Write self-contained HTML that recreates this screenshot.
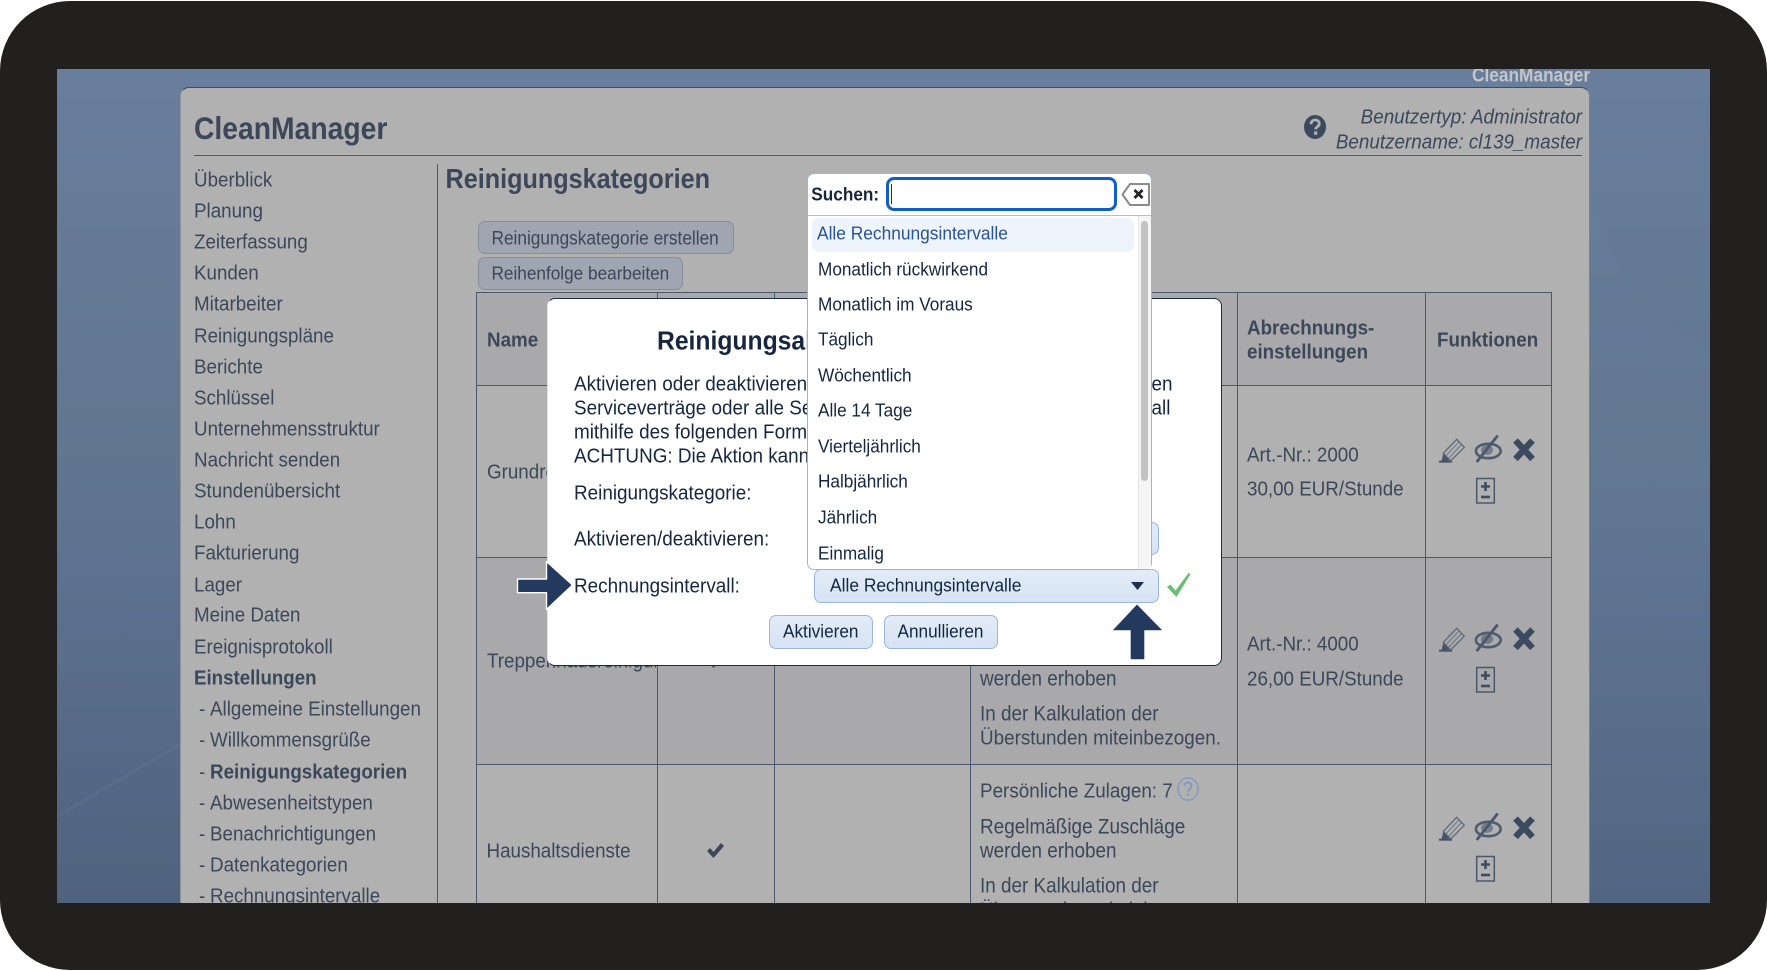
<!DOCTYPE html>
<html lang="de">
<head>
<meta charset="utf-8">
<title>CleanManager</title>
<style>
html,body{margin:0;padding:0;background:#fff;width:1767px;height:971px;overflow:hidden}
body{position:relative;font-family:"Liberation Sans",Arial,sans-serif}
#frame{position:absolute;left:0;top:1px;width:1767px;height:969px;background:#21201e;border-radius:70px}
#screen{position:absolute;left:57px;top:68.5px;width:1653px;height:834.5px;overflow:hidden;background:linear-gradient(180deg,#697e9d 0%,#61768f 45%,#5d7290 60%,#4f627e 100%)}
#stage{position:absolute;left:-57px;top:-68.5px;width:1767px;height:971px;--sy:1.1;color:#3c4759}
.t{position:absolute;line-height:0;white-space:nowrap;font-size:18.8px;transform-origin:0 0;transform:scaleY(var(--sy));left:calc(var(--x)*1px);top:calc(var(--b)*1px + .6px - .3465em*var(--sy))}
.tr{left:auto;right:calc((1767 - var(--x))*1px)}
.b{font-weight:bold}
.box{position:absolute;box-sizing:border-box}
#panel{left:180px;top:87px;width:1410px;height:900px;background:#b1b1b1;border-radius:9px 9px 0 0;border-top:1.5px solid #3d4e68;border-right:1px solid #76818f;border-left:1px solid #8e949d}
.ln{position:absolute;background:#4b586d}
.btn{position:absolute;box-sizing:border-box;background:#9fa6b1;border:1px solid #858e9c;border-radius:7px}
#modal{left:547px;top:298px;width:675px;height:368px;background:#fff;border:1.5px solid #1b2c4b;border-left:1px solid #dfe3ea;border-radius:8px}
#mw{--sy:1.06;color:#16263f}
#mw .t{font-size:18.9px}
#mw .dl{font-size:17.2px;margin-top:-.9px}
#mw .ui{font-size:17.4px;margin-top:-.6px}
.blu{position:absolute;box-sizing:border-box;background:linear-gradient(180deg,#e3ecf8,#d6e3f3);border:1.5px solid #9bb6e0;border-radius:7px}
#dd{left:807px;top:173px;width:345px;height:397px;background:#fff;border:1px solid #9ab4dc;border-radius:7px}
svg{position:absolute;overflow:visible}
</style>
</head>
<body>
<div id="frame"></div>
<div id="screen">
<div id="stage">
  <svg style="left:0;top:0" width="1767" height="971">
    <path d="M57 815 L180 743 L180 746 L57 818 Z" fill="#7186a2" opacity=".2"/>
    <path d="M1590 160 C1600 260 1640 320 1710 350 L1710 903 L1590 903 Z" fill="#7a8ba3" opacity=".10"/>
  </svg>

  <span class="t b" style="--x:1472;--b:81;font-size:17.3px;color:#c4c6c9">CleanManager</span>

  <div class="box" id="panel"></div>
  <span class="t b" style="--x:194;--b:138.3;font-size:28.3px">CleanManager</span>
  <div class="ln" style="left:194px;top:155px;width:1388px;height:1px"></div>

  <svg style="left:1304px;top:115px" width="22" height="24" viewBox="0 0 22 24"><ellipse cx="11" cy="12" rx="11" ry="12" fill="#3c4a5e"/><path d="M7 9.2 C7 6.5 9 5 11.2 5 C13.6 5 15.3 6.5 15.3 8.7 C15.3 11.5 11.7 11.8 11.7 14.4" fill="none" stroke="#b1b1b1" stroke-width="2.8"/><rect x="10" y="16.4" width="3.3" height="3.4" fill="#b1b1b1"/></svg>
  <span class="t tr" style="--x:1582;--b:123.3;font-style:italic;font-size:18.85px">Benutzertyp: Administrator</span>
  <span class="t tr" style="--x:1582;--b:148.8;font-style:italic;font-size:18.85px">Benutzername: cl139_master</span>

  <!-- nav -->
  <span class="t" style="--x:194;--b:186.5">Überblick</span>
  <span class="t" style="--x:194;--b:217.6">Planung</span>
  <span class="t" style="--x:194;--b:248.7">Zeiterfassung</span>
  <span class="t" style="--x:194;--b:280">Kunden</span>
  <span class="t" style="--x:194;--b:310.9">Mitarbeiter</span>
  <span class="t" style="--x:194;--b:342.4">Reinigungspläne</span>
  <span class="t" style="--x:194;--b:373.1">Berichte</span>
  <span class="t" style="--x:194;--b:404.2">Schlüssel</span>
  <span class="t" style="--x:194;--b:435.3">Unternehmensstruktur</span>
  <span class="t" style="--x:194;--b:466.4">Nachricht senden</span>
  <span class="t" style="--x:194;--b:497.5">Stundenübersicht</span>
  <span class="t" style="--x:194;--b:528.6">Lohn</span>
  <span class="t" style="--x:194;--b:559.7">Fakturierung</span>
  <span class="t" style="--x:194;--b:591.2">Lager</span>
  <span class="t" style="--x:194;--b:622">Meine Daten</span>
  <span class="t" style="--x:194;--b:653.4">Ereignisprotokoll</span>
  <span class="t b" style="--x:194;--b:684.1;font-size:18.7px">Einstellungen</span>
  <span class="t" style="--x:199;--b:716">- </span><span class="t" style="--x:210;--b:716">Allgemeine Einstellungen</span>
  <span class="t" style="--x:199;--b:746.7">- </span><span class="t" style="--x:210;--b:746.7">Willkommensgrüße</span>
  <span class="t" style="--x:199;--b:778.5">- </span><span class="t b" style="--x:210;--b:778.5">Reinigungskategorien</span>
  <span class="t" style="--x:199;--b:809.2">- </span><span class="t" style="--x:210;--b:809.2">Abwesenheitstypen</span>
  <span class="t" style="--x:199;--b:840.7">- </span><span class="t" style="--x:210;--b:840.7">Benachrichtigungen</span>
  <span class="t" style="--x:199;--b:871.4">- </span><span class="t" style="--x:210;--b:871.4">Datenkategorien</span>
  <span class="t" style="--x:199;--b:902.6">- </span><span class="t" style="--x:210;--b:902.6">Rechnungsintervalle</span>

  <div class="ln" style="left:437px;top:164px;width:1px;height:760px"></div>

  <span class="t b" style="--x:445.5;--b:188.5;font-size:25.2px">Reinigungskategorien</span>

  <div class="btn" style="left:478px;top:221px;width:256px;height:33px"></div>
  <span class="t" style="--x:491.5;--b:243.6;font-size:17.25px">Reinigungskategorie erstellen</span>
  <div class="btn" style="left:478px;top:257px;width:205px;height:33px"></div>
  <span class="t" style="--x:491.5;--b:278.7;font-size:17.2px">Reihenfolge bearbeiten</span>

  <!-- table backgrounds -->
  <div class="box" style="left:476px;top:292px;width:1075px;height:93px;background:#a9a9ab"></div>
  <div class="box" style="left:476px;top:385px;width:1075px;height:172px;background:#b1b1b1"></div>
  <div class="box" style="left:476px;top:557px;width:1075px;height:207px;background:#a9a9ab"></div>
  <div class="box" style="left:476px;top:764px;width:1075px;height:160px;background:#b1b1b1"></div>
  <!-- table lines -->
  <div class="ln" style="left:476px;top:292px;width:1076px;height:1px"></div>
  <div class="ln" style="left:476px;top:385px;width:1076px;height:1px"></div>
  <div class="ln" style="left:476px;top:557px;width:1076px;height:1px"></div>
  <div class="ln" style="left:476px;top:764px;width:1076px;height:1px"></div>
  <div class="ln" style="left:476px;top:292px;width:1px;height:640px"></div>
  <div class="ln" style="left:656.5px;top:292px;width:1px;height:640px"></div>
  <div class="ln" style="left:774px;top:292px;width:1px;height:640px"></div>
  <div class="ln" style="left:970px;top:292px;width:1px;height:640px"></div>
  <div class="ln" style="left:1237px;top:292px;width:1px;height:640px"></div>
  <div class="ln" style="left:1425px;top:292px;width:1px;height:640px"></div>
  <div class="ln" style="left:1551px;top:292px;width:1px;height:640px"></div>

  <!-- table text -->
  <span class="t b" style="--x:487;--b:346.7">Name</span>
  <span class="t b" style="--x:1247;--b:335">Abrechnungs-</span>
  <span class="t b" style="--x:1247;--b:358.3">einstellungen</span>
  <span class="t b" style="--x:1437;--b:346.7">Funktionen</span>

  <span class="t" style="--x:487;--b:479">Grundreinigung</span>
  <span class="t" style="--x:1247;--b:461.8">Art.-Nr.: 2000</span>
  <span class="t" style="--x:1247;--b:496">30,00 EUR/Stunde</span>

  <div style="position:absolute;left:477px;top:640px;width:179px;height:40px;overflow:hidden">
    <span class="t" style="--x:10;--b:27.5">Treppenhausreinigung</span>
  </div>
  <svg style="left:707px;top:653px" width="17" height="15" viewBox="0 0 17 15"><path d="M0 8 L3 5 L6.5 9 L14 0 L17 3 L6.5 15 Z" fill="#3c4759"/></svg>
  <span class="t" style="--x:980;--b:686.3;font-size:18.9px">werden erhoben</span>
  <span class="t" style="--x:980;--b:721.8;font-size:18.9px">In der Kalkulation der</span>
  <span class="t" style="--x:980;--b:744.8;font-size:18.85px">Überstunden miteinbezogen.</span>
  <span class="t" style="--x:1247;--b:651">Art.-Nr.: 4000</span>
  <span class="t" style="--x:1247;--b:685.3">26,00 EUR/Stunde</span>

  <span class="t" style="--x:486.5;--b:857.8">Haushaltsdienste</span>
  <svg style="left:707px;top:843px" width="17" height="15" viewBox="0 0 17 15"><path d="M0 8 L3 5 L6.5 9 L14 0 L17 3 L6.5 15 Z" fill="#3c4759"/></svg>
  <span class="t" style="--x:980;--b:797.9;font-size:18.85px">Persönliche Zulagen: 7</span>
  <svg style="left:1177px;top:777px" width="22" height="24" viewBox="0 0 22 24"><ellipse cx="11" cy="12" rx="10" ry="11.2" fill="none" stroke="#829ac2" stroke-width="1.5"/><path d="M7.5 9.2 C7.5 6.8 9.2 5.5 11 5.5 C13 5.5 14.5 6.8 14.5 8.8 C14.5 11.5 11.2 11.8 11.2 14.8" fill="none" stroke="#829ac2" stroke-width="1.9"/><rect x="10.1" y="16.6" width="2.2" height="2.4" fill="#829ac2"/></svg>
  <span class="t" style="--x:980;--b:834.3;font-size:18.95px">Regelmäßige Zuschläge</span>
  <span class="t" style="--x:980;--b:858.3;font-size:18.9px">werden erhoben</span>
  <span class="t" style="--x:980;--b:893.5;font-size:18.9px">In der Kalkulation der</span>
  <span class="t" style="--x:980;--b:916.3;font-size:18.85px">Überstunden miteinbezogen.</span>

  <!-- icons rows -->
  <svg style="left:1439px;top:435px" width="100" height="70" viewBox="0 0 100 70">
    <path d="M0 26.7 H13" stroke="#46536a" stroke-width="2" fill="none"/>
    <path d="M4.3 18.3 L11 25.5 L2.5 26.5 Z" fill="#46536a"/>
    <path d="M4.3 18.3 L17.7 4.3 L25.3 12.3 L11.7 26 Z" fill="none" stroke="#5c687a" stroke-width="1.3"/>
    <path d="M7 20.8 L20 6.8 M9.6 23.4 L22.6 9.4" stroke="#6a7586" stroke-width="1" fill="none"/>
    <ellipse cx="49.3" cy="16" rx="12.4" ry="7.2" fill="none" stroke="#4f5c70" stroke-width="2.6"/>
    <ellipse cx="48" cy="15" rx="6" ry="5" fill="#4f5c70" opacity=".6"/>
    <path d="M37.7 27 L58.7 0.5" stroke="#4b586c" stroke-width="2.8" fill="none"/>
    <path d="M76.5 5.5 L93.5 24 M93.5 5.5 L76.5 24" stroke="#3b4a5e" stroke-width="6.4" fill="none"/>
    <rect x="37.7" y="43.5" width="17.6" height="24.5" fill="none" stroke="#4b586c" stroke-width="1.5"/>
    <path d="M46.5 47 V56 M42 51.5 H51" stroke="#3f4c60" stroke-width="2.6" fill="none"/>
    <path d="M42 62 H51" stroke="#3f4c60" stroke-width="2.6" fill="none"/>
  </svg>
  <svg style="left:1439px;top:624px" width="100" height="70" viewBox="0 0 100 70">
    <path d="M0 26.7 H13" stroke="#46536a" stroke-width="2" fill="none"/>
    <path d="M4.3 18.3 L11 25.5 L2.5 26.5 Z" fill="#46536a"/>
    <path d="M4.3 18.3 L17.7 4.3 L25.3 12.3 L11.7 26 Z" fill="none" stroke="#5c687a" stroke-width="1.3"/>
    <path d="M7 20.8 L20 6.8 M9.6 23.4 L22.6 9.4" stroke="#6a7586" stroke-width="1" fill="none"/>
    <ellipse cx="49.3" cy="16" rx="12.4" ry="7.2" fill="none" stroke="#4f5c70" stroke-width="2.6"/>
    <ellipse cx="48" cy="15" rx="6" ry="5" fill="#4f5c70" opacity=".6"/>
    <path d="M37.7 27 L58.7 0.5" stroke="#4b586c" stroke-width="2.8" fill="none"/>
    <path d="M76.5 5.5 L93.5 24 M93.5 5.5 L76.5 24" stroke="#3b4a5e" stroke-width="6.4" fill="none"/>
    <rect x="37.7" y="43.5" width="17.6" height="24.5" fill="none" stroke="#4b586c" stroke-width="1.5"/>
    <path d="M46.5 47 V56 M42 51.5 H51" stroke="#3f4c60" stroke-width="2.6" fill="none"/>
    <path d="M42 62 H51" stroke="#3f4c60" stroke-width="2.6" fill="none"/>
  </svg>
  <svg style="left:1439px;top:813px" width="100" height="70" viewBox="0 0 100 70">
    <path d="M0 26.7 H13" stroke="#46536a" stroke-width="2" fill="none"/>
    <path d="M4.3 18.3 L11 25.5 L2.5 26.5 Z" fill="#46536a"/>
    <path d="M4.3 18.3 L17.7 4.3 L25.3 12.3 L11.7 26 Z" fill="none" stroke="#5c687a" stroke-width="1.3"/>
    <path d="M7 20.8 L20 6.8 M9.6 23.4 L22.6 9.4" stroke="#6a7586" stroke-width="1" fill="none"/>
    <ellipse cx="49.3" cy="16" rx="12.4" ry="7.2" fill="none" stroke="#4f5c70" stroke-width="2.6"/>
    <ellipse cx="48" cy="15" rx="6" ry="5" fill="#4f5c70" opacity=".6"/>
    <path d="M37.7 27 L58.7 0.5" stroke="#4b586c" stroke-width="2.8" fill="none"/>
    <path d="M76.5 5.5 L93.5 24 M93.5 5.5 L76.5 24" stroke="#3b4a5e" stroke-width="6.4" fill="none"/>
    <rect x="37.7" y="43.5" width="17.6" height="24.5" fill="none" stroke="#4b586c" stroke-width="1.5"/>
    <path d="M46.5 47 V56 M42 51.5 H51" stroke="#3f4c60" stroke-width="2.6" fill="none"/>
    <path d="M42 62 H51" stroke="#3f4c60" stroke-width="2.6" fill="none"/>
  </svg>

  <!-- modal -->
  <div class="box" id="modal"></div>
  <div id="mw" style="position:absolute;left:0;top:0;width:1767px;height:971px">
    <span class="t b" style="--x:657;--b:350.3;font-size:24.7px">Reinigungsaktivierung</span>
    <span class="t" style="--x:574;--b:391.7">Aktivieren oder deaktivieren Sie</span>
    <span class="t" style="--x:574;--b:415.3">Serviceverträge oder alle Service</span>
    <span class="t" style="--x:574;--b:439.3">mithilfe des folgenden Formulars</span>
    <span class="t" style="--x:574;--b:463">ACHTUNG: Die Aktion kann nicht</span>
    <span class="t" style="--x:1151.5;--b:391.7">en</span>
    <span class="t" style="--x:1151.5;--b:415.3">all</span>
    <span class="t" style="--x:574;--b:500.3">Reinigungskategorie:</span>
    <span class="t" style="--x:574;--b:546.8">Aktivieren/deaktivieren:</span>
    <span class="t" style="--x:574;--b:593.3">Rechnungsintervall:</span>

    <div class="blu" style="left:814px;top:522px;width:345px;height:33px"></div>
    <div class="blu" style="left:814px;top:569px;width:345px;height:34px"></div>
    <span class="t ui" style="--x:830;--b:591">Alle Rechnungsintervalle</span>
    <svg style="left:1131px;top:582px" width="13" height="8" viewBox="0 0 13 8"><path d="M0 0 H13 L6.5 8 Z" fill="#1f2f4d"/></svg>
    <svg style="left:1166.5px;top:573px" width="24" height="24" viewBox="0 0 24 24"><path d="M0 14 L3.4 11.5 L8.5 17.5 L21.5 0 L23.5 1.2 L9.5 24 Z" fill="#6dbc74"/></svg>

    <div class="blu" style="left:769px;top:615px;width:104px;height:34px"></div>
    <span class="t ui" style="--x:783;--b:637.7;font-size:17.2px">Aktivieren</span>
    <div class="blu" style="left:884px;top:615px;width:114px;height:34px"></div>
    <span class="t ui" style="--x:897.5;--b:637.7;font-size:17.2px">Annullieren</span>

    <!-- arrows -->
    <svg style="left:515px;top:560px" width="60" height="52" viewBox="515 560 60 52"><path d="M517.5 579 H546.5 V561.5 L572.5 585 L546.5 609.5 V592.7 H517.5 Z" fill="#233a5e" stroke="#fff" stroke-width="1.4" stroke-linejoin="round"/></svg>
    <svg style="left:1112px;top:604px" width="51" height="56" viewBox="1112 604 51 56"><path d="M1137 605 L1161.5 630 H1144 V659 H1131 V630 H1113.5 Z" fill="#233a5e" stroke="#233a5e" stroke-width=".6" stroke-linejoin="round"/></svg>

    <!-- dropdown -->
    <div class="box" id="dd"></div>
    <span class="t b" style="--x:811.3;--b:199.6;font-size:17.2px">Suchen:</span>
    <div class="box" style="left:885.5px;top:177px;width:231.5px;height:34px;background:#fff;border:3px solid #0f5fc8;border-radius:8px"></div>
    <div class="box" style="left:891px;top:184px;width:1px;height:20px;background:#333"></div>
    <svg style="left:1120.5px;top:182px" width="30" height="25" viewBox="0 0 30 25"><path d="M1.5 12.5 L9 2 H28 V23 H9 Z" fill="#fff" stroke="#8b8b8b" stroke-width="2" stroke-linejoin="round"/><path d="M13.5 8 L21.5 16 M21.5 8 L13.5 16" stroke="#222" stroke-width="2.8"/></svg>
    <div class="box" style="left:808px;top:215px;width:343px;height:1px;background:#a9c0e4"></div>
    <div class="box" style="left:1138px;top:216px;width:13px;height:353px;background:#f5f5f5;border-left:1px solid #e6e6e6"></div>
    <div class="box" style="left:1141px;top:221px;width:7px;height:260px;background:#c2c2c2;border-radius:4px"></div>
    <div class="box" style="left:811.7px;top:218px;width:322.5px;height:33.7px;background:#eef4fc;border-radius:7px"></div>
    <span class="t dl" style="--x:817;--b:240;font-size:17.35px;color:#2a5298">Alle Rechnungsintervalle</span>
    <span class="t dl" style="--x:818;--b:275.4">Monatlich rückwirkend</span>
    <span class="t dl" style="--x:818;--b:310.2">Monatlich im Voraus</span>
    <span class="t dl" style="--x:818;--b:346">Täglich</span>
    <span class="t dl" style="--x:818;--b:381.5">Wöchentlich</span>
    <span class="t dl" style="--x:818;--b:417">Alle 14 Tage</span>
    <span class="t dl" style="--x:818;--b:452.5">Vierteljährlich</span>
    <span class="t dl" style="--x:818;--b:488">Halbjährlich</span>
    <span class="t dl" style="--x:818;--b:523.5">Jährlich</span>
    <span class="t dl" style="--x:818;--b:559.3">Einmalig</span>
  </div>
</div>
</div>
</body>
</html>
